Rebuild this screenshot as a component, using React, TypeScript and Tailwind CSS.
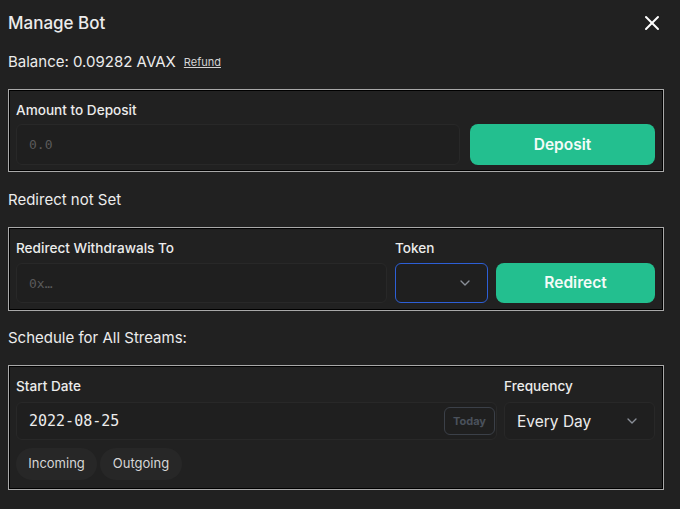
import { X, ChevronDown } from 'lucide-react';

const Fieldbox = ({ children, className = '' }: { children: React.ReactNode; className?: string }) => (
  <div className={`border border-[#a9a9a9] ${className}`}>
    <div className="border border-black px-[6px] pr-[7px]">{children}</div>
  </div>
);

const mono = { fontFamily: '"DejaVu Sans Mono", monospace' };

export default function App(): JSX.Element {
  return (
    <div
      className="h-[509px] w-[680px] overflow-hidden bg-[#212121] pl-2 pr-4 text-[#ececec]"
      style={{ fontFamily: 'Inter, "Noto Sans", sans-serif' }}
    >
      <div className="flex h-[44px] items-center justify-between pt-[2px]">
        <h2 className="text-[17px] font-medium leading-none">Manage Bot</h2>
        <X size={24} strokeWidth={2} className="text-white" />
      </div>

      <div className="mt-[8px] flex h-[20px] items-center gap-[8px] pt-[1px]">
        <span className="text-[15px]">Balance: 0.09282 AVAX</span>
        <span className="text-[11px] text-[#d4d4d4] underline">Refund</span>
      </div>

      <Fieldbox className="mt-[17px]">
        <div className="pb-[5px] pt-[9px]">
          <label className="block text-[13.6px] font-medium leading-[20px]">Amount to Deposit</label>
          <div className="mt-[4px] flex gap-[10px]">
            <div className="flex h-[41px] flex-1 items-center rounded-md border border-[#282828] bg-[#1f1f1f] px-[12px]">
              <span className="pt-[1px] text-[13px] text-[#5a5a5a]" style={mono}>
                0.0
              </span>
            </div>
            <button
              type="button"
              className="h-[41px] w-[185px] rounded-lg bg-[#23bf8f] text-[15.5px] font-semibold text-[#f4fbf8]"
            >
              Deposit
            </button>
          </div>
        </div>
      </Fieldbox>

      <div className="mt-[18px] flex h-[20px] items-center pt-[1px] text-[15px]">Redirect not Set</div>

      <Fieldbox className="mt-[17px]">
        <div className="flex gap-[8px] pb-[6px] pt-[9px]">
          <div className="flex-1">
            <label className="block text-[13.6px] font-medium leading-[20px]">Redirect Withdrawals To</label>
            <div className="mt-[5px] flex h-[40px] items-center rounded-md border border-[#282828] bg-[#1f1f1f] px-[12px]">
              <span className="pt-[1px] text-[13px] text-[#5a5a5a]" style={mono}>
                0x…
              </span>
            </div>
          </div>
          <div className="w-[93px]">
            <label className="block text-[13.6px] font-medium leading-[20px]">Token</label>
            <div className="mt-[5px] flex h-[40px] items-center justify-end rounded-md border border-[#2d5fd6] bg-[#1f1f1f] pr-[14px]">
              <ChevronDown size={16} strokeWidth={2} className="text-[#8a8f98]" />
            </div>
          </div>
          <div className="flex w-[159px] flex-col justify-end">
            <button
              type="button"
              className="h-[40px] rounded-lg bg-[#23bf8f] text-[15.5px] font-semibold text-[#f4fbf8]"
            >
              Redirect
            </button>
          </div>
        </div>
      </Fieldbox>

      <div className="mt-[17px] flex h-[20px] items-center pt-[1px] text-[15px]">Schedule for All Streams:</div>

      <Fieldbox className="mt-[17px]">
        <div className="pb-[8px] pt-[9px]">
          <div className="flex gap-[7px]">
            <div className="flex-1">
              <label className="block text-[13.6px] font-medium leading-[20px]">Start Date</label>
              <div className="mt-[6px] flex h-[38px] items-center justify-between rounded-md border border-[#282828] bg-[#1f1f1f] pl-[12px] pr-[1px]">
                <span className="pt-[1px] text-[15px] text-[#ececec]" style={mono}>
                  2022-08-25
                </span>
                <span className="flex h-[28px] w-[51px] items-center justify-center rounded-md border border-[#3b4048] text-[11px] font-bold text-[#4a515b]">
                  Today
                </span>
              </div>
            </div>
            <div className="w-[151px]">
              <label className="block text-[13.6px] font-medium leading-[20px]">Frequency</label>
              <div className="mt-[6px] flex h-[38px] items-center justify-between rounded-md border border-[#282828] bg-[#1f1f1f] pl-[12px] pr-[14px]">
                <span className="pt-[1px] text-[15.5px] text-[#ececec]">Every Day</span>
                <ChevronDown size={16} strokeWidth={2} className="text-[#8a8f98]" />
              </div>
            </div>
          </div>
          <div className="mt-[8px] flex gap-[3px]">
            <span className="flex h-[32px] w-[81px] items-center justify-center rounded-full bg-[#272727] text-[13px] text-[#d6d6d6]">
              Incoming
            </span>
            <span className="flex h-[32px] w-[82px] items-center justify-center rounded-full bg-[#272727] text-[13px] text-[#d6d6d6]">
              Outgoing
            </span>
          </div>
        </div>
      </Fieldbox>
    </div>
  );
}
